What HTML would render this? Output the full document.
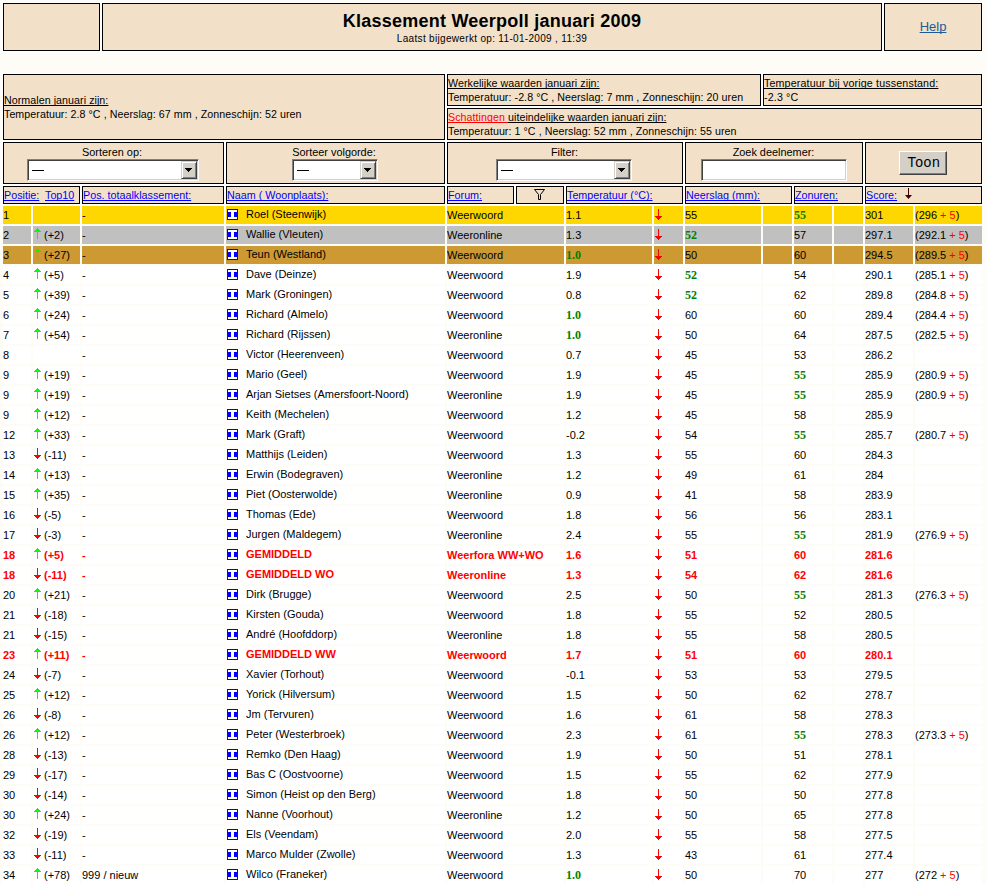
<!DOCTYPE html>
<html><head><meta charset="utf-8"><title>Klassement Weerpoll januari 2009</title>
<style>
html,body{margin:0;padding:0;}
body{width:986px;height:884px;overflow:hidden;background:#FDFCF7;position:relative;font-family:"Liberation Sans",sans-serif;color:#000;}
div,svg{position:absolute;}
u{text-decoration-skip-ink:none;}
.b{box-sizing:border-box;border:1px solid #000;background:#F3E0C8;}
.w{background:#fff;}
.title{text-align:center;font-weight:bold;font-size:18px;line-height:20px;top:10px;letter-spacing:0.24px;}
.sub{text-align:center;font-size:10px;line-height:12px;letter-spacing:0.32px;}
.help{text-align:center;font-size:13px;line-height:16px;color:#1E5A96;}
.info{font-size:10.67px;line-height:14px;white-space:pre;letter-spacing:0.06px;}
.lab{text-align:center;font-size:10.9px;line-height:14px;}
.ht{font-size:10.75px;line-height:16px;color:#00f;white-space:pre;}
.sel{height:22px;box-sizing:border-box;background:#fff;border-style:solid;border-width:1px;border-color:#808080 #fff #fff #808080;box-shadow:inset 1px 1px 0 #404040,inset -1px -1px 0 #D4D0C8;}
.inp{height:22px;box-sizing:border-box;background:#fff;border-style:solid;border-width:1px;border-color:#808080 #fff #fff #808080;box-shadow:inset 1px 1px 0 #404040,inset -1px -1px 0 #D4D0C8;}
.dash{left:4px;top:10px;width:12px;height:1px;background:#000;}
.btn{right:1px;top:1px;width:16px;height:18px;box-sizing:border-box;background:#D4D0C8;border-style:solid;border-width:1px;border-color:#D4D0C8 #404040 #404040 #D4D0C8;box-shadow:inset 1px 1px 0 #fff,inset -1px -1px 0 #808080;}
.tri{left:3px;top:6px;width:0;height:0;border-left:3.5px solid transparent;border-right:3.5px solid transparent;border-top:4px solid #000;}
.toon{width:48px;height:24px;box-sizing:border-box;background:#D4D0C8;border-style:solid;border-width:1px;border-color:#fff #404040 #404040 #fff;box-shadow:inset -1px -1px 0 #808080;font-size:14px;line-height:21px;text-align:center;letter-spacing:0.6px;text-indent:1px;}
.row{left:0;width:986px;height:18px;}
.c{top:0;height:18px;}
.d{top:0;font-size:11px;line-height:18px;white-space:pre;}
.r{color:#f00;font-weight:bold;}
.g{color:#008000;font-weight:bold;font-family:"Liberation Serif",serif;font-size:12px;}
.ai{width:11px;height:11px;}
.ar,.ic{position:absolute;left:0;top:0;}
</style></head><body>
<div class="w" style="left:2px;top:2px;width:981px;height:50px;"></div>
<div class="b" style="left:3px;top:3px;width:97px;height:48px;"></div>
<div class="b" style="left:102px;top:3px;width:780px;height:48px;"></div>
<div class="b" style="left:884px;top:3px;width:98px;height:48px;"></div>
<div class="title" style="left:102px;top:11px;width:780px;">Klassement Weerpoll januari 2009</div>
<div class="sub" style="left:102px;top:33px;width:780px;">Laatst bijgewerkt op: 11-01-2009 , 11:39</div>
<div class="help" style="left:884px;top:19px;width:98px;"><u>Help</u></div>
<div class="w" style="left:2px;top:73px;width:981px;height:132px;"></div>
<div class="b" style="left:3px;top:74px;width:442px;height:66px;"></div>
<div class="b" style="left:447px;top:74px;width:314px;height:32px;"></div>
<div class="b" style="left:763px;top:74px;width:219px;height:32px;"></div>
<div class="b" style="left:447px;top:108px;width:535px;height:32px;"></div>
<div class="info" style="left:4px;top:93px;"><u>Normalen januari zijn:</u><br>Temperatuur: 2.8 °C , Neerslag: 67 mm , Zonneschijn: 52 uren</div>
<div class="info" style="left:448px;top:76px;"><u>Werkelijke waarden januari zijn:</u><br>Temperatuur: -2.8 °C , Neerslag: 7 mm , Zonneschijn: 20 uren</div>
<div class="info" style="left:764px;top:76px;letter-spacing:0.16px"><u>Temperatuur bij vorige tussenstand:</u><br>-2.3 °C</div>
<div class="info" style="left:448px;top:110px;"><u style="color:#f00">Schattingen </u><u>uiteindelijke waarden januari zijn:</u><br>Temperatuur: 1 °C , Neerslag: 52 mm , Zonneschijn: 55 uren</div>
<div class="b" style="left:3px;top:142px;width:221px;height:42px;"></div>
<div class="lab" style="left:2px;top:145px;width:220px;">Sorteren op:</div>
<div class="sel" style="left:27px;top:159px;width:172px;"><div class="dash"></div><div class="btn"><svg style="left:3px;top:6px" width="7" height="4" viewBox="0 0 7 4"><path d="M0 0H7V1H6V2H5V3H4V4H3V3H2V2H1V1H0Z" fill="#000"/></svg></div></div>
<div class="b" style="left:226px;top:142px;width:219px;height:42px;"></div>
<div class="lab" style="left:225px;top:145px;width:218px;">Sorteer volgorde:</div>
<div class="sel" style="left:292px;top:159px;width:86px;"><div class="dash"></div><div class="btn"><svg style="left:3px;top:6px" width="7" height="4" viewBox="0 0 7 4"><path d="M0 0H7V1H6V2H5V3H4V4H3V3H2V2H1V1H0Z" fill="#000"/></svg></div></div>
<div class="b" style="left:447px;top:142px;width:236px;height:42px;"></div>
<div class="lab" style="left:447px;top:145px;width:235px;">Filter:</div>
<div class="sel" style="left:496px;top:159px;width:136px;"><div class="dash"></div><div class="btn"><svg style="left:3px;top:6px" width="7" height="4" viewBox="0 0 7 4"><path d="M0 0H7V1H6V2H5V3H4V4H3V3H2V2H1V1H0Z" fill="#000"/></svg></div></div>
<div class="b" style="left:685px;top:142px;width:178px;height:42px;"></div>
<div class="lab" style="left:685px;top:145px;width:177px;">Zoek deelnemer:</div>
<div class="inp" style="left:701px;top:159px;width:146px;"></div>
<div class="b" style="left:865px;top:142px;width:117px;height:42px;"></div>
<div class="toon" style="left:899px;top:151px;text-indent:2px;">Toon</div>
<div class="b" style="left:3px;top:186px;width:77px;height:18px;"></div>
<div class="b" style="left:82px;top:186px;width:142px;height:18px;"></div>
<div class="b" style="left:226px;top:186px;width:219px;height:18px;"></div>
<div class="b" style="left:447px;top:186px;width:67px;height:18px;"></div>
<div class="b" style="left:516px;top:186px;width:48px;height:18px;"></div>
<div class="b" style="left:566px;top:186px;width:117px;height:18px;"></div>
<div class="b" style="left:685px;top:186px;width:107px;height:18px;"></div>
<div class="b" style="left:794px;top:186px;width:69px;height:18px;"></div>
<div class="b" style="left:865px;top:186px;width:117px;height:18px;"></div>
<div class="ht" style="left:4px;top:187px;"><u>Positie:</u></div>
<div class="ht" style="left:45px;top:187px;"><u>Top10</u></div>
<div class="ht" style="left:83px;top:187px;"><u>Pos. totaalklassement:</u></div>
<div class="ht" style="left:227px;top:187px;"><u>Naam ( Woonplaats):</u></div>
<div class="ht" style="left:448px;top:187px;"><u>Forum:</u></div>
<div class="ht" style="left:567px;top:187px;"><u>Temperatuur (°C):</u></div>
<div class="ht" style="left:686px;top:187px;"><u>Neerslag (mm):</u></div>
<div class="ht" style="left:795px;top:187px;"><u>Zonuren:</u></div>
<div class="ht" style="left:866px;top:187px;"><u>Score:</u></div>
<svg class="ic" style="left:534px;top:189px" width="11" height="11" viewBox="0 0 11 11"><path d="M0.5 0.5H10.5L6.5 5.5V10.5H4.5V5.5Z" fill="none" stroke="#000" stroke-width="1"/></svg>
<svg class="ic" style="left:905px;top:188px" width="7" height="11" viewBox="0 0 7 11"><rect x="3" y="0" width="1" height="7" fill="#400"/><path d="M0 7H7L3.5 11Z" fill="#400"/></svg>
<div class="row" style="top:206px">
<div class="c" style="left:3px;width:28px;background:#FFD700"></div>
<div class="c" style="left:33px;width:47px;background:#FFD700"></div>
<div class="c" style="left:82px;width:142px;background:#FFD700"></div>
<div class="c" style="left:226px;width:219px;background:#FFD700"></div>
<div class="c" style="left:447px;width:117px;background:#FFD700"></div>
<div class="c" style="left:566px;width:86px;background:#FFD700"></div>
<div class="c" style="left:654px;width:29px;background:#FFD700"></div>
<div class="c" style="left:685px;width:76px;background:#FFD700"></div>
<div class="c" style="left:763px;width:29px;background:#FFD700"></div>
<div class="c" style="left:794px;width:38px;background:#FFD700"></div>
<div class="c" style="left:834px;width:29px;background:#FFD700"></div>
<div class="c" style="left:865px;width:48px;background:#FFD700"></div>
<div class="c" style="left:915px;width:67px;background:#FFD700"></div>
<div class="d" style="left:3px;">1</div>
<div class="d" style="left:82px;">-</div>
<div class="ai" style="left:227px;top:3px"><svg class="ic" width="11" height="11" viewBox="0 0 11 11"><rect width="11" height="11" fill="#00f"/><path d="M1 1h9v2H7v5h3v2H1V8h3V3H1z" fill="#fff"/></svg></div>
<div class="d" style="left:246px;top:-1px">Roel (Steenwijk)</div>
<div class="d" style="left:447px;">Weerwoord</div>
<div class="d" style="left:566px;">1.1</div>
<div class="ai" style="left:655px;top:3px"><svg class="ar" width="7" height="11" viewBox="0 0 7 11"><path d="M3 0h1v7h3v1h-1v1h-1v1h-1v1H3v-1H2V9H1V8H0V7h3z" fill="#f00"/></svg></div>
<div class="d" style="left:685px;">55</div>
<div class="d g" style="left:794px">55</div>
<div class="d" style="left:865px;">301</div>
<div class="d" style="left:915px;">(296 <span style="color:#f00">+ 5</span>)</div>
</div>
<div class="row" style="top:226px">
<div class="c" style="left:3px;width:28px;background:#C0C0C0"></div>
<div class="c" style="left:33px;width:47px;background:#C0C0C0"></div>
<div class="c" style="left:82px;width:142px;background:#C0C0C0"></div>
<div class="c" style="left:226px;width:219px;background:#C0C0C0"></div>
<div class="c" style="left:447px;width:117px;background:#C0C0C0"></div>
<div class="c" style="left:566px;width:86px;background:#C0C0C0"></div>
<div class="c" style="left:654px;width:29px;background:#C0C0C0"></div>
<div class="c" style="left:685px;width:76px;background:#C0C0C0"></div>
<div class="c" style="left:763px;width:29px;background:#C0C0C0"></div>
<div class="c" style="left:794px;width:38px;background:#C0C0C0"></div>
<div class="c" style="left:834px;width:29px;background:#C0C0C0"></div>
<div class="c" style="left:865px;width:48px;background:#C0C0C0"></div>
<div class="c" style="left:915px;width:67px;background:#C0C0C0"></div>
<div class="d" style="left:3px;">2</div>
<div class="ai" style="left:34px;top:2px"><svg class="ar" width="7" height="11" viewBox="0 0 7 11"><path d="M3 0h1v1h1v1h1v1h1v1H4v7H3V4H0V3h1V2h1V1h1z" fill="#0f0"/></svg></div>
<div class="d" style="left:44px;">(+2)</div>
<div class="d" style="left:82px;">-</div>
<div class="ai" style="left:227px;top:3px"><svg class="ic" width="11" height="11" viewBox="0 0 11 11"><rect width="11" height="11" fill="#00f"/><path d="M1 1h9v2H7v5h3v2H1V8h3V3H1z" fill="#fff"/></svg></div>
<div class="d" style="left:246px;top:-1px">Wallie (Vleuten)</div>
<div class="d" style="left:447px;">Weeronline</div>
<div class="d" style="left:566px;">1.3</div>
<div class="ai" style="left:655px;top:3px"><svg class="ar" width="7" height="11" viewBox="0 0 7 11"><path d="M3 0h1v7h3v1h-1v1h-1v1h-1v1H3v-1H2V9H1V8H0V7h3z" fill="#f00"/></svg></div>
<div class="d g" style="left:685px">52</div>
<div class="d" style="left:794px;">57</div>
<div class="d" style="left:865px;">297.1</div>
<div class="d" style="left:915px;">(292.1 <span style="color:#f00">+ 5</span>)</div>
</div>
<div class="row" style="top:246px">
<div class="c" style="left:3px;width:28px;background:#CC9933"></div>
<div class="c" style="left:33px;width:47px;background:#CC9933"></div>
<div class="c" style="left:82px;width:142px;background:#CC9933"></div>
<div class="c" style="left:226px;width:219px;background:#CC9933"></div>
<div class="c" style="left:447px;width:117px;background:#CC9933"></div>
<div class="c" style="left:566px;width:86px;background:#CC9933"></div>
<div class="c" style="left:654px;width:29px;background:#CC9933"></div>
<div class="c" style="left:685px;width:76px;background:#CC9933"></div>
<div class="c" style="left:763px;width:29px;background:#CC9933"></div>
<div class="c" style="left:794px;width:38px;background:#CC9933"></div>
<div class="c" style="left:834px;width:29px;background:#CC9933"></div>
<div class="c" style="left:865px;width:48px;background:#CC9933"></div>
<div class="c" style="left:915px;width:67px;background:#CC9933"></div>
<div class="d" style="left:3px;">3</div>
<div class="ai" style="left:34px;top:2px"><svg class="ar" width="7" height="11" viewBox="0 0 7 11"><path d="M3 0h1v1h1v1h1v1h1v1H4v7H3V4H0V3h1V2h1V1h1z" fill="#0f0"/></svg></div>
<div class="d" style="left:44px;">(+27)</div>
<div class="d" style="left:82px;">-</div>
<div class="ai" style="left:227px;top:3px"><svg class="ic" width="11" height="11" viewBox="0 0 11 11"><rect width="11" height="11" fill="#00f"/><path d="M1 1h9v2H7v5h3v2H1V8h3V3H1z" fill="#fff"/></svg></div>
<div class="d" style="left:246px;top:-1px">Teun (Westland)</div>
<div class="d" style="left:447px;">Weerwoord</div>
<div class="d g" style="left:566px">1.0</div>
<div class="ai" style="left:655px;top:3px"><svg class="ar" width="7" height="11" viewBox="0 0 7 11"><path d="M3 0h1v7h3v1h-1v1h-1v1h-1v1H3v-1H2V9H1V8H0V7h3z" fill="#f00"/></svg></div>
<div class="d" style="left:685px;">50</div>
<div class="d" style="left:794px;">60</div>
<div class="d" style="left:865px;">294.5</div>
<div class="d" style="left:915px;">(289.5 <span style="color:#f00">+ 5</span>)</div>
</div>
<div class="row" style="top:266px">
<div class="c" style="left:3px;width:28px;background:#fff"></div>
<div class="c" style="left:33px;width:47px;background:#fff"></div>
<div class="c" style="left:82px;width:142px;background:#fff"></div>
<div class="c" style="left:226px;width:219px;background:#fff"></div>
<div class="c" style="left:447px;width:117px;background:#fff"></div>
<div class="c" style="left:566px;width:86px;background:#fff"></div>
<div class="c" style="left:654px;width:29px;background:#fff"></div>
<div class="c" style="left:685px;width:76px;background:#fff"></div>
<div class="c" style="left:763px;width:29px;background:#fff"></div>
<div class="c" style="left:794px;width:38px;background:#fff"></div>
<div class="c" style="left:834px;width:29px;background:#fff"></div>
<div class="c" style="left:865px;width:48px;background:#fff"></div>
<div class="c" style="left:915px;width:67px;background:#fff"></div>
<div class="d" style="left:3px;">4</div>
<div class="ai" style="left:34px;top:2px"><svg class="ar" width="7" height="11" viewBox="0 0 7 11"><path d="M3 0h1v1h1v1h1v1h1v1H4v7H3V4H0V3h1V2h1V1h1z" fill="#0f0"/></svg></div>
<div class="d" style="left:44px;">(+5)</div>
<div class="d" style="left:82px;">-</div>
<div class="ai" style="left:227px;top:3px"><svg class="ic" width="11" height="11" viewBox="0 0 11 11"><rect width="11" height="11" fill="#00f"/><path d="M1 1h9v2H7v5h3v2H1V8h3V3H1z" fill="#fff"/></svg></div>
<div class="d" style="left:246px;top:-1px">Dave (Deinze)</div>
<div class="d" style="left:447px;">Weerwoord</div>
<div class="d" style="left:566px;">1.9</div>
<div class="ai" style="left:655px;top:3px"><svg class="ar" width="7" height="11" viewBox="0 0 7 11"><path d="M3 0h1v7h3v1h-1v1h-1v1h-1v1H3v-1H2V9H1V8H0V7h3z" fill="#f00"/></svg></div>
<div class="d g" style="left:685px">52</div>
<div class="d" style="left:794px;">54</div>
<div class="d" style="left:865px;">290.1</div>
<div class="d" style="left:915px;">(285.1 <span style="color:#f00">+ 5</span>)</div>
</div>
<div class="row" style="top:286px">
<div class="c" style="left:3px;width:28px;background:#fff"></div>
<div class="c" style="left:33px;width:47px;background:#fff"></div>
<div class="c" style="left:82px;width:142px;background:#fff"></div>
<div class="c" style="left:226px;width:219px;background:#fff"></div>
<div class="c" style="left:447px;width:117px;background:#fff"></div>
<div class="c" style="left:566px;width:86px;background:#fff"></div>
<div class="c" style="left:654px;width:29px;background:#fff"></div>
<div class="c" style="left:685px;width:76px;background:#fff"></div>
<div class="c" style="left:763px;width:29px;background:#fff"></div>
<div class="c" style="left:794px;width:38px;background:#fff"></div>
<div class="c" style="left:834px;width:29px;background:#fff"></div>
<div class="c" style="left:865px;width:48px;background:#fff"></div>
<div class="c" style="left:915px;width:67px;background:#fff"></div>
<div class="d" style="left:3px;">5</div>
<div class="ai" style="left:34px;top:2px"><svg class="ar" width="7" height="11" viewBox="0 0 7 11"><path d="M3 0h1v1h1v1h1v1h1v1H4v7H3V4H0V3h1V2h1V1h1z" fill="#0f0"/></svg></div>
<div class="d" style="left:44px;">(+39)</div>
<div class="d" style="left:82px;">-</div>
<div class="ai" style="left:227px;top:3px"><svg class="ic" width="11" height="11" viewBox="0 0 11 11"><rect width="11" height="11" fill="#00f"/><path d="M1 1h9v2H7v5h3v2H1V8h3V3H1z" fill="#fff"/></svg></div>
<div class="d" style="left:246px;top:-1px">Mark (Groningen)</div>
<div class="d" style="left:447px;">Weerwoord</div>
<div class="d" style="left:566px;">0.8</div>
<div class="ai" style="left:655px;top:3px"><svg class="ar" width="7" height="11" viewBox="0 0 7 11"><path d="M3 0h1v7h3v1h-1v1h-1v1h-1v1H3v-1H2V9H1V8H0V7h3z" fill="#f00"/></svg></div>
<div class="d g" style="left:685px">52</div>
<div class="d" style="left:794px;">62</div>
<div class="d" style="left:865px;">289.8</div>
<div class="d" style="left:915px;">(284.8 <span style="color:#f00">+ 5</span>)</div>
</div>
<div class="row" style="top:306px">
<div class="c" style="left:3px;width:28px;background:#fff"></div>
<div class="c" style="left:33px;width:47px;background:#fff"></div>
<div class="c" style="left:82px;width:142px;background:#fff"></div>
<div class="c" style="left:226px;width:219px;background:#fff"></div>
<div class="c" style="left:447px;width:117px;background:#fff"></div>
<div class="c" style="left:566px;width:86px;background:#fff"></div>
<div class="c" style="left:654px;width:29px;background:#fff"></div>
<div class="c" style="left:685px;width:76px;background:#fff"></div>
<div class="c" style="left:763px;width:29px;background:#fff"></div>
<div class="c" style="left:794px;width:38px;background:#fff"></div>
<div class="c" style="left:834px;width:29px;background:#fff"></div>
<div class="c" style="left:865px;width:48px;background:#fff"></div>
<div class="c" style="left:915px;width:67px;background:#fff"></div>
<div class="d" style="left:3px;">6</div>
<div class="ai" style="left:34px;top:2px"><svg class="ar" width="7" height="11" viewBox="0 0 7 11"><path d="M3 0h1v1h1v1h1v1h1v1H4v7H3V4H0V3h1V2h1V1h1z" fill="#0f0"/></svg></div>
<div class="d" style="left:44px;">(+24)</div>
<div class="d" style="left:82px;">-</div>
<div class="ai" style="left:227px;top:3px"><svg class="ic" width="11" height="11" viewBox="0 0 11 11"><rect width="11" height="11" fill="#00f"/><path d="M1 1h9v2H7v5h3v2H1V8h3V3H1z" fill="#fff"/></svg></div>
<div class="d" style="left:246px;top:-1px">Richard (Almelo)</div>
<div class="d" style="left:447px;">Weerwoord</div>
<div class="d g" style="left:566px">1.0</div>
<div class="ai" style="left:655px;top:3px"><svg class="ar" width="7" height="11" viewBox="0 0 7 11"><path d="M3 0h1v7h3v1h-1v1h-1v1h-1v1H3v-1H2V9H1V8H0V7h3z" fill="#f00"/></svg></div>
<div class="d" style="left:685px;">60</div>
<div class="d" style="left:794px;">60</div>
<div class="d" style="left:865px;">289.4</div>
<div class="d" style="left:915px;">(284.4 <span style="color:#f00">+ 5</span>)</div>
</div>
<div class="row" style="top:326px">
<div class="c" style="left:3px;width:28px;background:#fff"></div>
<div class="c" style="left:33px;width:47px;background:#fff"></div>
<div class="c" style="left:82px;width:142px;background:#fff"></div>
<div class="c" style="left:226px;width:219px;background:#fff"></div>
<div class="c" style="left:447px;width:117px;background:#fff"></div>
<div class="c" style="left:566px;width:86px;background:#fff"></div>
<div class="c" style="left:654px;width:29px;background:#fff"></div>
<div class="c" style="left:685px;width:76px;background:#fff"></div>
<div class="c" style="left:763px;width:29px;background:#fff"></div>
<div class="c" style="left:794px;width:38px;background:#fff"></div>
<div class="c" style="left:834px;width:29px;background:#fff"></div>
<div class="c" style="left:865px;width:48px;background:#fff"></div>
<div class="c" style="left:915px;width:67px;background:#fff"></div>
<div class="d" style="left:3px;">7</div>
<div class="ai" style="left:34px;top:2px"><svg class="ar" width="7" height="11" viewBox="0 0 7 11"><path d="M3 0h1v1h1v1h1v1h1v1H4v7H3V4H0V3h1V2h1V1h1z" fill="#0f0"/></svg></div>
<div class="d" style="left:44px;">(+54)</div>
<div class="d" style="left:82px;">-</div>
<div class="ai" style="left:227px;top:3px"><svg class="ic" width="11" height="11" viewBox="0 0 11 11"><rect width="11" height="11" fill="#00f"/><path d="M1 1h9v2H7v5h3v2H1V8h3V3H1z" fill="#fff"/></svg></div>
<div class="d" style="left:246px;top:-1px">Richard (Rijssen)</div>
<div class="d" style="left:447px;">Weeronline</div>
<div class="d g" style="left:566px">1.0</div>
<div class="ai" style="left:655px;top:3px"><svg class="ar" width="7" height="11" viewBox="0 0 7 11"><path d="M3 0h1v7h3v1h-1v1h-1v1h-1v1H3v-1H2V9H1V8H0V7h3z" fill="#f00"/></svg></div>
<div class="d" style="left:685px;">50</div>
<div class="d" style="left:794px;">64</div>
<div class="d" style="left:865px;">287.5</div>
<div class="d" style="left:915px;">(282.5 <span style="color:#f00">+ 5</span>)</div>
</div>
<div class="row" style="top:346px">
<div class="c" style="left:3px;width:28px;background:#fff"></div>
<div class="c" style="left:33px;width:47px;background:#fff"></div>
<div class="c" style="left:82px;width:142px;background:#fff"></div>
<div class="c" style="left:226px;width:219px;background:#fff"></div>
<div class="c" style="left:447px;width:117px;background:#fff"></div>
<div class="c" style="left:566px;width:86px;background:#fff"></div>
<div class="c" style="left:654px;width:29px;background:#fff"></div>
<div class="c" style="left:685px;width:76px;background:#fff"></div>
<div class="c" style="left:763px;width:29px;background:#fff"></div>
<div class="c" style="left:794px;width:38px;background:#fff"></div>
<div class="c" style="left:834px;width:29px;background:#fff"></div>
<div class="c" style="left:865px;width:48px;background:#fff"></div>
<div class="c" style="left:915px;width:67px;background:#fff"></div>
<div class="d" style="left:3px;">8</div>
<div class="d" style="left:82px;">-</div>
<div class="ai" style="left:227px;top:3px"><svg class="ic" width="11" height="11" viewBox="0 0 11 11"><rect width="11" height="11" fill="#00f"/><path d="M1 1h9v2H7v5h3v2H1V8h3V3H1z" fill="#fff"/></svg></div>
<div class="d" style="left:246px;top:-1px">Victor (Heerenveen)</div>
<div class="d" style="left:447px;">Weerwoord</div>
<div class="d" style="left:566px;">0.7</div>
<div class="ai" style="left:655px;top:3px"><svg class="ar" width="7" height="11" viewBox="0 0 7 11"><path d="M3 0h1v7h3v1h-1v1h-1v1h-1v1H3v-1H2V9H1V8H0V7h3z" fill="#f00"/></svg></div>
<div class="d" style="left:685px;">45</div>
<div class="d" style="left:794px;">53</div>
<div class="d" style="left:865px;">286.2</div>
</div>
<div class="row" style="top:366px">
<div class="c" style="left:3px;width:28px;background:#fff"></div>
<div class="c" style="left:33px;width:47px;background:#fff"></div>
<div class="c" style="left:82px;width:142px;background:#fff"></div>
<div class="c" style="left:226px;width:219px;background:#fff"></div>
<div class="c" style="left:447px;width:117px;background:#fff"></div>
<div class="c" style="left:566px;width:86px;background:#fff"></div>
<div class="c" style="left:654px;width:29px;background:#fff"></div>
<div class="c" style="left:685px;width:76px;background:#fff"></div>
<div class="c" style="left:763px;width:29px;background:#fff"></div>
<div class="c" style="left:794px;width:38px;background:#fff"></div>
<div class="c" style="left:834px;width:29px;background:#fff"></div>
<div class="c" style="left:865px;width:48px;background:#fff"></div>
<div class="c" style="left:915px;width:67px;background:#fff"></div>
<div class="d" style="left:3px;">9</div>
<div class="ai" style="left:34px;top:2px"><svg class="ar" width="7" height="11" viewBox="0 0 7 11"><path d="M3 0h1v1h1v1h1v1h1v1H4v7H3V4H0V3h1V2h1V1h1z" fill="#0f0"/></svg></div>
<div class="d" style="left:44px;">(+19)</div>
<div class="d" style="left:82px;">-</div>
<div class="ai" style="left:227px;top:3px"><svg class="ic" width="11" height="11" viewBox="0 0 11 11"><rect width="11" height="11" fill="#00f"/><path d="M1 1h9v2H7v5h3v2H1V8h3V3H1z" fill="#fff"/></svg></div>
<div class="d" style="left:246px;top:-1px">Mario (Geel)</div>
<div class="d" style="left:447px;">Weerwoord</div>
<div class="d" style="left:566px;">1.9</div>
<div class="ai" style="left:655px;top:3px"><svg class="ar" width="7" height="11" viewBox="0 0 7 11"><path d="M3 0h1v7h3v1h-1v1h-1v1h-1v1H3v-1H2V9H1V8H0V7h3z" fill="#f00"/></svg></div>
<div class="d" style="left:685px;">45</div>
<div class="d g" style="left:794px">55</div>
<div class="d" style="left:865px;">285.9</div>
<div class="d" style="left:915px;">(280.9 <span style="color:#f00">+ 5</span>)</div>
</div>
<div class="row" style="top:386px">
<div class="c" style="left:3px;width:28px;background:#fff"></div>
<div class="c" style="left:33px;width:47px;background:#fff"></div>
<div class="c" style="left:82px;width:142px;background:#fff"></div>
<div class="c" style="left:226px;width:219px;background:#fff"></div>
<div class="c" style="left:447px;width:117px;background:#fff"></div>
<div class="c" style="left:566px;width:86px;background:#fff"></div>
<div class="c" style="left:654px;width:29px;background:#fff"></div>
<div class="c" style="left:685px;width:76px;background:#fff"></div>
<div class="c" style="left:763px;width:29px;background:#fff"></div>
<div class="c" style="left:794px;width:38px;background:#fff"></div>
<div class="c" style="left:834px;width:29px;background:#fff"></div>
<div class="c" style="left:865px;width:48px;background:#fff"></div>
<div class="c" style="left:915px;width:67px;background:#fff"></div>
<div class="d" style="left:3px;">9</div>
<div class="ai" style="left:34px;top:2px"><svg class="ar" width="7" height="11" viewBox="0 0 7 11"><path d="M3 0h1v1h1v1h1v1h1v1H4v7H3V4H0V3h1V2h1V1h1z" fill="#0f0"/></svg></div>
<div class="d" style="left:44px;">(+19)</div>
<div class="d" style="left:82px;">-</div>
<div class="ai" style="left:227px;top:3px"><svg class="ic" width="11" height="11" viewBox="0 0 11 11"><rect width="11" height="11" fill="#00f"/><path d="M1 1h9v2H7v5h3v2H1V8h3V3H1z" fill="#fff"/></svg></div>
<div class="d" style="left:246px;top:-1px">Arjan Sietses (Amersfoort-Noord)</div>
<div class="d" style="left:447px;">Weeronline</div>
<div class="d" style="left:566px;">1.9</div>
<div class="ai" style="left:655px;top:3px"><svg class="ar" width="7" height="11" viewBox="0 0 7 11"><path d="M3 0h1v7h3v1h-1v1h-1v1h-1v1H3v-1H2V9H1V8H0V7h3z" fill="#f00"/></svg></div>
<div class="d" style="left:685px;">45</div>
<div class="d g" style="left:794px">55</div>
<div class="d" style="left:865px;">285.9</div>
<div class="d" style="left:915px;">(280.9 <span style="color:#f00">+ 5</span>)</div>
</div>
<div class="row" style="top:406px">
<div class="c" style="left:3px;width:28px;background:#fff"></div>
<div class="c" style="left:33px;width:47px;background:#fff"></div>
<div class="c" style="left:82px;width:142px;background:#fff"></div>
<div class="c" style="left:226px;width:219px;background:#fff"></div>
<div class="c" style="left:447px;width:117px;background:#fff"></div>
<div class="c" style="left:566px;width:86px;background:#fff"></div>
<div class="c" style="left:654px;width:29px;background:#fff"></div>
<div class="c" style="left:685px;width:76px;background:#fff"></div>
<div class="c" style="left:763px;width:29px;background:#fff"></div>
<div class="c" style="left:794px;width:38px;background:#fff"></div>
<div class="c" style="left:834px;width:29px;background:#fff"></div>
<div class="c" style="left:865px;width:48px;background:#fff"></div>
<div class="c" style="left:915px;width:67px;background:#fff"></div>
<div class="d" style="left:3px;">9</div>
<div class="ai" style="left:34px;top:2px"><svg class="ar" width="7" height="11" viewBox="0 0 7 11"><path d="M3 0h1v1h1v1h1v1h1v1H4v7H3V4H0V3h1V2h1V1h1z" fill="#0f0"/></svg></div>
<div class="d" style="left:44px;">(+12)</div>
<div class="d" style="left:82px;">-</div>
<div class="ai" style="left:227px;top:3px"><svg class="ic" width="11" height="11" viewBox="0 0 11 11"><rect width="11" height="11" fill="#00f"/><path d="M1 1h9v2H7v5h3v2H1V8h3V3H1z" fill="#fff"/></svg></div>
<div class="d" style="left:246px;top:-1px">Keith (Mechelen)</div>
<div class="d" style="left:447px;">Weerwoord</div>
<div class="d" style="left:566px;">1.2</div>
<div class="ai" style="left:655px;top:3px"><svg class="ar" width="7" height="11" viewBox="0 0 7 11"><path d="M3 0h1v7h3v1h-1v1h-1v1h-1v1H3v-1H2V9H1V8H0V7h3z" fill="#f00"/></svg></div>
<div class="d" style="left:685px;">45</div>
<div class="d" style="left:794px;">58</div>
<div class="d" style="left:865px;">285.9</div>
</div>
<div class="row" style="top:426px">
<div class="c" style="left:3px;width:28px;background:#fff"></div>
<div class="c" style="left:33px;width:47px;background:#fff"></div>
<div class="c" style="left:82px;width:142px;background:#fff"></div>
<div class="c" style="left:226px;width:219px;background:#fff"></div>
<div class="c" style="left:447px;width:117px;background:#fff"></div>
<div class="c" style="left:566px;width:86px;background:#fff"></div>
<div class="c" style="left:654px;width:29px;background:#fff"></div>
<div class="c" style="left:685px;width:76px;background:#fff"></div>
<div class="c" style="left:763px;width:29px;background:#fff"></div>
<div class="c" style="left:794px;width:38px;background:#fff"></div>
<div class="c" style="left:834px;width:29px;background:#fff"></div>
<div class="c" style="left:865px;width:48px;background:#fff"></div>
<div class="c" style="left:915px;width:67px;background:#fff"></div>
<div class="d" style="left:3px;">12</div>
<div class="ai" style="left:34px;top:2px"><svg class="ar" width="7" height="11" viewBox="0 0 7 11"><path d="M3 0h1v1h1v1h1v1h1v1H4v7H3V4H0V3h1V2h1V1h1z" fill="#0f0"/></svg></div>
<div class="d" style="left:44px;">(+33)</div>
<div class="d" style="left:82px;">-</div>
<div class="ai" style="left:227px;top:3px"><svg class="ic" width="11" height="11" viewBox="0 0 11 11"><rect width="11" height="11" fill="#00f"/><path d="M1 1h9v2H7v5h3v2H1V8h3V3H1z" fill="#fff"/></svg></div>
<div class="d" style="left:246px;top:-1px">Mark (Graft)</div>
<div class="d" style="left:447px;">Weerwoord</div>
<div class="d" style="left:566px;">-0.2</div>
<div class="ai" style="left:655px;top:3px"><svg class="ar" width="7" height="11" viewBox="0 0 7 11"><path d="M3 0h1v7h3v1h-1v1h-1v1h-1v1H3v-1H2V9H1V8H0V7h3z" fill="#f00"/></svg></div>
<div class="d" style="left:685px;">54</div>
<div class="d g" style="left:794px">55</div>
<div class="d" style="left:865px;">285.7</div>
<div class="d" style="left:915px;">(280.7 <span style="color:#f00">+ 5</span>)</div>
</div>
<div class="row" style="top:446px">
<div class="c" style="left:3px;width:28px;background:#fff"></div>
<div class="c" style="left:33px;width:47px;background:#fff"></div>
<div class="c" style="left:82px;width:142px;background:#fff"></div>
<div class="c" style="left:226px;width:219px;background:#fff"></div>
<div class="c" style="left:447px;width:117px;background:#fff"></div>
<div class="c" style="left:566px;width:86px;background:#fff"></div>
<div class="c" style="left:654px;width:29px;background:#fff"></div>
<div class="c" style="left:685px;width:76px;background:#fff"></div>
<div class="c" style="left:763px;width:29px;background:#fff"></div>
<div class="c" style="left:794px;width:38px;background:#fff"></div>
<div class="c" style="left:834px;width:29px;background:#fff"></div>
<div class="c" style="left:865px;width:48px;background:#fff"></div>
<div class="c" style="left:915px;width:67px;background:#fff"></div>
<div class="d" style="left:3px;">13</div>
<div class="ai" style="left:34px;top:2px"><svg class="ar" width="7" height="11" viewBox="0 0 7 11"><path d="M3 0h1v7h3v1h-1v1h-1v1h-1v1H3v-1H2V9H1V8H0V7h3z" fill="#f00"/></svg></div>
<div class="d" style="left:44px;">(-11)</div>
<div class="d" style="left:82px;">-</div>
<div class="ai" style="left:227px;top:3px"><svg class="ic" width="11" height="11" viewBox="0 0 11 11"><rect width="11" height="11" fill="#00f"/><path d="M1 1h9v2H7v5h3v2H1V8h3V3H1z" fill="#fff"/></svg></div>
<div class="d" style="left:246px;top:-1px">Matthijs (Leiden)</div>
<div class="d" style="left:447px;">Weerwoord</div>
<div class="d" style="left:566px;">1.3</div>
<div class="ai" style="left:655px;top:3px"><svg class="ar" width="7" height="11" viewBox="0 0 7 11"><path d="M3 0h1v7h3v1h-1v1h-1v1h-1v1H3v-1H2V9H1V8H0V7h3z" fill="#f00"/></svg></div>
<div class="d" style="left:685px;">55</div>
<div class="d" style="left:794px;">60</div>
<div class="d" style="left:865px;">284.3</div>
</div>
<div class="row" style="top:466px">
<div class="c" style="left:3px;width:28px;background:#fff"></div>
<div class="c" style="left:33px;width:47px;background:#fff"></div>
<div class="c" style="left:82px;width:142px;background:#fff"></div>
<div class="c" style="left:226px;width:219px;background:#fff"></div>
<div class="c" style="left:447px;width:117px;background:#fff"></div>
<div class="c" style="left:566px;width:86px;background:#fff"></div>
<div class="c" style="left:654px;width:29px;background:#fff"></div>
<div class="c" style="left:685px;width:76px;background:#fff"></div>
<div class="c" style="left:763px;width:29px;background:#fff"></div>
<div class="c" style="left:794px;width:38px;background:#fff"></div>
<div class="c" style="left:834px;width:29px;background:#fff"></div>
<div class="c" style="left:865px;width:48px;background:#fff"></div>
<div class="c" style="left:915px;width:67px;background:#fff"></div>
<div class="d" style="left:3px;">14</div>
<div class="ai" style="left:34px;top:2px"><svg class="ar" width="7" height="11" viewBox="0 0 7 11"><path d="M3 0h1v1h1v1h1v1h1v1H4v7H3V4H0V3h1V2h1V1h1z" fill="#0f0"/></svg></div>
<div class="d" style="left:44px;">(+13)</div>
<div class="d" style="left:82px;">-</div>
<div class="ai" style="left:227px;top:3px"><svg class="ic" width="11" height="11" viewBox="0 0 11 11"><rect width="11" height="11" fill="#00f"/><path d="M1 1h9v2H7v5h3v2H1V8h3V3H1z" fill="#fff"/></svg></div>
<div class="d" style="left:246px;top:-1px">Erwin (Bodegraven)</div>
<div class="d" style="left:447px;">Weeronline</div>
<div class="d" style="left:566px;">1.2</div>
<div class="ai" style="left:655px;top:3px"><svg class="ar" width="7" height="11" viewBox="0 0 7 11"><path d="M3 0h1v7h3v1h-1v1h-1v1h-1v1H3v-1H2V9H1V8H0V7h3z" fill="#f00"/></svg></div>
<div class="d" style="left:685px;">49</div>
<div class="d" style="left:794px;">61</div>
<div class="d" style="left:865px;">284</div>
</div>
<div class="row" style="top:486px">
<div class="c" style="left:3px;width:28px;background:#fff"></div>
<div class="c" style="left:33px;width:47px;background:#fff"></div>
<div class="c" style="left:82px;width:142px;background:#fff"></div>
<div class="c" style="left:226px;width:219px;background:#fff"></div>
<div class="c" style="left:447px;width:117px;background:#fff"></div>
<div class="c" style="left:566px;width:86px;background:#fff"></div>
<div class="c" style="left:654px;width:29px;background:#fff"></div>
<div class="c" style="left:685px;width:76px;background:#fff"></div>
<div class="c" style="left:763px;width:29px;background:#fff"></div>
<div class="c" style="left:794px;width:38px;background:#fff"></div>
<div class="c" style="left:834px;width:29px;background:#fff"></div>
<div class="c" style="left:865px;width:48px;background:#fff"></div>
<div class="c" style="left:915px;width:67px;background:#fff"></div>
<div class="d" style="left:3px;">15</div>
<div class="ai" style="left:34px;top:2px"><svg class="ar" width="7" height="11" viewBox="0 0 7 11"><path d="M3 0h1v1h1v1h1v1h1v1H4v7H3V4H0V3h1V2h1V1h1z" fill="#0f0"/></svg></div>
<div class="d" style="left:44px;">(+35)</div>
<div class="d" style="left:82px;">-</div>
<div class="ai" style="left:227px;top:3px"><svg class="ic" width="11" height="11" viewBox="0 0 11 11"><rect width="11" height="11" fill="#00f"/><path d="M1 1h9v2H7v5h3v2H1V8h3V3H1z" fill="#fff"/></svg></div>
<div class="d" style="left:246px;top:-1px">Piet (Oosterwolde)</div>
<div class="d" style="left:447px;">Weeronline</div>
<div class="d" style="left:566px;">0.9</div>
<div class="ai" style="left:655px;top:3px"><svg class="ar" width="7" height="11" viewBox="0 0 7 11"><path d="M3 0h1v7h3v1h-1v1h-1v1h-1v1H3v-1H2V9H1V8H0V7h3z" fill="#f00"/></svg></div>
<div class="d" style="left:685px;">41</div>
<div class="d" style="left:794px;">58</div>
<div class="d" style="left:865px;">283.9</div>
</div>
<div class="row" style="top:506px">
<div class="c" style="left:3px;width:28px;background:#fff"></div>
<div class="c" style="left:33px;width:47px;background:#fff"></div>
<div class="c" style="left:82px;width:142px;background:#fff"></div>
<div class="c" style="left:226px;width:219px;background:#fff"></div>
<div class="c" style="left:447px;width:117px;background:#fff"></div>
<div class="c" style="left:566px;width:86px;background:#fff"></div>
<div class="c" style="left:654px;width:29px;background:#fff"></div>
<div class="c" style="left:685px;width:76px;background:#fff"></div>
<div class="c" style="left:763px;width:29px;background:#fff"></div>
<div class="c" style="left:794px;width:38px;background:#fff"></div>
<div class="c" style="left:834px;width:29px;background:#fff"></div>
<div class="c" style="left:865px;width:48px;background:#fff"></div>
<div class="c" style="left:915px;width:67px;background:#fff"></div>
<div class="d" style="left:3px;">16</div>
<div class="ai" style="left:34px;top:2px"><svg class="ar" width="7" height="11" viewBox="0 0 7 11"><path d="M3 0h1v7h3v1h-1v1h-1v1h-1v1H3v-1H2V9H1V8H0V7h3z" fill="#f00"/></svg></div>
<div class="d" style="left:44px;">(-5)</div>
<div class="d" style="left:82px;">-</div>
<div class="ai" style="left:227px;top:3px"><svg class="ic" width="11" height="11" viewBox="0 0 11 11"><rect width="11" height="11" fill="#00f"/><path d="M1 1h9v2H7v5h3v2H1V8h3V3H1z" fill="#fff"/></svg></div>
<div class="d" style="left:246px;top:-1px">Thomas (Ede)</div>
<div class="d" style="left:447px;">Weerwoord</div>
<div class="d" style="left:566px;">1.8</div>
<div class="ai" style="left:655px;top:3px"><svg class="ar" width="7" height="11" viewBox="0 0 7 11"><path d="M3 0h1v7h3v1h-1v1h-1v1h-1v1H3v-1H2V9H1V8H0V7h3z" fill="#f00"/></svg></div>
<div class="d" style="left:685px;">56</div>
<div class="d" style="left:794px;">56</div>
<div class="d" style="left:865px;">283.1</div>
</div>
<div class="row" style="top:526px">
<div class="c" style="left:3px;width:28px;background:#fff"></div>
<div class="c" style="left:33px;width:47px;background:#fff"></div>
<div class="c" style="left:82px;width:142px;background:#fff"></div>
<div class="c" style="left:226px;width:219px;background:#fff"></div>
<div class="c" style="left:447px;width:117px;background:#fff"></div>
<div class="c" style="left:566px;width:86px;background:#fff"></div>
<div class="c" style="left:654px;width:29px;background:#fff"></div>
<div class="c" style="left:685px;width:76px;background:#fff"></div>
<div class="c" style="left:763px;width:29px;background:#fff"></div>
<div class="c" style="left:794px;width:38px;background:#fff"></div>
<div class="c" style="left:834px;width:29px;background:#fff"></div>
<div class="c" style="left:865px;width:48px;background:#fff"></div>
<div class="c" style="left:915px;width:67px;background:#fff"></div>
<div class="d" style="left:3px;">17</div>
<div class="ai" style="left:34px;top:2px"><svg class="ar" width="7" height="11" viewBox="0 0 7 11"><path d="M3 0h1v7h3v1h-1v1h-1v1h-1v1H3v-1H2V9H1V8H0V7h3z" fill="#f00"/></svg></div>
<div class="d" style="left:44px;">(-3)</div>
<div class="d" style="left:82px;">-</div>
<div class="ai" style="left:227px;top:3px"><svg class="ic" width="11" height="11" viewBox="0 0 11 11"><rect width="11" height="11" fill="#00f"/><path d="M1 1h9v2H7v5h3v2H1V8h3V3H1z" fill="#fff"/></svg></div>
<div class="d" style="left:246px;top:-1px">Jurgen (Maldegem)</div>
<div class="d" style="left:447px;">Weeronline</div>
<div class="d" style="left:566px;">2.4</div>
<div class="ai" style="left:655px;top:3px"><svg class="ar" width="7" height="11" viewBox="0 0 7 11"><path d="M3 0h1v7h3v1h-1v1h-1v1h-1v1H3v-1H2V9H1V8H0V7h3z" fill="#f00"/></svg></div>
<div class="d" style="left:685px;">55</div>
<div class="d g" style="left:794px">55</div>
<div class="d" style="left:865px;">281.9</div>
<div class="d" style="left:915px;">(276.9 <span style="color:#f00">+ 5</span>)</div>
</div>
<div class="row" style="top:546px">
<div class="c" style="left:3px;width:28px;background:#fff"></div>
<div class="c" style="left:33px;width:47px;background:#fff"></div>
<div class="c" style="left:82px;width:142px;background:#fff"></div>
<div class="c" style="left:226px;width:219px;background:#fff"></div>
<div class="c" style="left:447px;width:117px;background:#fff"></div>
<div class="c" style="left:566px;width:86px;background:#fff"></div>
<div class="c" style="left:654px;width:29px;background:#fff"></div>
<div class="c" style="left:685px;width:76px;background:#fff"></div>
<div class="c" style="left:763px;width:29px;background:#fff"></div>
<div class="c" style="left:794px;width:38px;background:#fff"></div>
<div class="c" style="left:834px;width:29px;background:#fff"></div>
<div class="c" style="left:865px;width:48px;background:#fff"></div>
<div class="c" style="left:915px;width:67px;background:#fff"></div>
<div class="d r" style="left:3px;">18</div>
<div class="ai" style="left:34px;top:2px"><svg class="ar" width="7" height="11" viewBox="0 0 7 11"><path d="M3 0h1v1h1v1h1v1h1v1H4v7H3V4H0V3h1V2h1V1h1z" fill="#0f0"/></svg></div>
<div class="d r" style="left:44px;">(+5)</div>
<div class="d r" style="left:82px;">-</div>
<div class="ai" style="left:227px;top:3px"><svg class="ic" width="11" height="11" viewBox="0 0 11 11"><rect width="11" height="11" fill="#00f"/><path d="M1 1h9v2H7v5h3v2H1V8h3V3H1z" fill="#fff"/></svg></div>
<div class="d r" style="left:246px;top:-1px">GEMIDDELD</div>
<div class="d r" style="left:447px;">Weerfora WW+WO</div>
<div class="d r" style="left:566px;">1.6</div>
<div class="ai" style="left:655px;top:3px"><svg class="ar" width="7" height="11" viewBox="0 0 7 11"><path d="M3 0h1v7h3v1h-1v1h-1v1h-1v1H3v-1H2V9H1V8H0V7h3z" fill="#f00"/></svg></div>
<div class="d r" style="left:685px;">51</div>
<div class="d r" style="left:794px;">60</div>
<div class="d r" style="left:865px;">281.6</div>
</div>
<div class="row" style="top:566px">
<div class="c" style="left:3px;width:28px;background:#fff"></div>
<div class="c" style="left:33px;width:47px;background:#fff"></div>
<div class="c" style="left:82px;width:142px;background:#fff"></div>
<div class="c" style="left:226px;width:219px;background:#fff"></div>
<div class="c" style="left:447px;width:117px;background:#fff"></div>
<div class="c" style="left:566px;width:86px;background:#fff"></div>
<div class="c" style="left:654px;width:29px;background:#fff"></div>
<div class="c" style="left:685px;width:76px;background:#fff"></div>
<div class="c" style="left:763px;width:29px;background:#fff"></div>
<div class="c" style="left:794px;width:38px;background:#fff"></div>
<div class="c" style="left:834px;width:29px;background:#fff"></div>
<div class="c" style="left:865px;width:48px;background:#fff"></div>
<div class="c" style="left:915px;width:67px;background:#fff"></div>
<div class="d r" style="left:3px;">18</div>
<div class="ai" style="left:34px;top:2px"><svg class="ar" width="7" height="11" viewBox="0 0 7 11"><path d="M3 0h1v7h3v1h-1v1h-1v1h-1v1H3v-1H2V9H1V8H0V7h3z" fill="#f00"/></svg></div>
<div class="d r" style="left:44px;">(-11)</div>
<div class="d r" style="left:82px;">-</div>
<div class="ai" style="left:227px;top:3px"><svg class="ic" width="11" height="11" viewBox="0 0 11 11"><rect width="11" height="11" fill="#00f"/><path d="M1 1h9v2H7v5h3v2H1V8h3V3H1z" fill="#fff"/></svg></div>
<div class="d r" style="left:246px;top:-1px">GEMIDDELD WO</div>
<div class="d r" style="left:447px;">Weeronline</div>
<div class="d r" style="left:566px;">1.3</div>
<div class="ai" style="left:655px;top:3px"><svg class="ar" width="7" height="11" viewBox="0 0 7 11"><path d="M3 0h1v7h3v1h-1v1h-1v1h-1v1H3v-1H2V9H1V8H0V7h3z" fill="#f00"/></svg></div>
<div class="d r" style="left:685px;">54</div>
<div class="d r" style="left:794px;">62</div>
<div class="d r" style="left:865px;">281.6</div>
</div>
<div class="row" style="top:586px">
<div class="c" style="left:3px;width:28px;background:#fff"></div>
<div class="c" style="left:33px;width:47px;background:#fff"></div>
<div class="c" style="left:82px;width:142px;background:#fff"></div>
<div class="c" style="left:226px;width:219px;background:#fff"></div>
<div class="c" style="left:447px;width:117px;background:#fff"></div>
<div class="c" style="left:566px;width:86px;background:#fff"></div>
<div class="c" style="left:654px;width:29px;background:#fff"></div>
<div class="c" style="left:685px;width:76px;background:#fff"></div>
<div class="c" style="left:763px;width:29px;background:#fff"></div>
<div class="c" style="left:794px;width:38px;background:#fff"></div>
<div class="c" style="left:834px;width:29px;background:#fff"></div>
<div class="c" style="left:865px;width:48px;background:#fff"></div>
<div class="c" style="left:915px;width:67px;background:#fff"></div>
<div class="d" style="left:3px;">20</div>
<div class="ai" style="left:34px;top:2px"><svg class="ar" width="7" height="11" viewBox="0 0 7 11"><path d="M3 0h1v1h1v1h1v1h1v1H4v7H3V4H0V3h1V2h1V1h1z" fill="#0f0"/></svg></div>
<div class="d" style="left:44px;">(+21)</div>
<div class="d" style="left:82px;">-</div>
<div class="ai" style="left:227px;top:3px"><svg class="ic" width="11" height="11" viewBox="0 0 11 11"><rect width="11" height="11" fill="#00f"/><path d="M1 1h9v2H7v5h3v2H1V8h3V3H1z" fill="#fff"/></svg></div>
<div class="d" style="left:246px;top:-1px">Dirk (Brugge)</div>
<div class="d" style="left:447px;">Weerwoord</div>
<div class="d" style="left:566px;">2.5</div>
<div class="ai" style="left:655px;top:3px"><svg class="ar" width="7" height="11" viewBox="0 0 7 11"><path d="M3 0h1v7h3v1h-1v1h-1v1h-1v1H3v-1H2V9H1V8H0V7h3z" fill="#f00"/></svg></div>
<div class="d" style="left:685px;">50</div>
<div class="d g" style="left:794px">55</div>
<div class="d" style="left:865px;">281.3</div>
<div class="d" style="left:915px;">(276.3 <span style="color:#f00">+ 5</span>)</div>
</div>
<div class="row" style="top:606px">
<div class="c" style="left:3px;width:28px;background:#fff"></div>
<div class="c" style="left:33px;width:47px;background:#fff"></div>
<div class="c" style="left:82px;width:142px;background:#fff"></div>
<div class="c" style="left:226px;width:219px;background:#fff"></div>
<div class="c" style="left:447px;width:117px;background:#fff"></div>
<div class="c" style="left:566px;width:86px;background:#fff"></div>
<div class="c" style="left:654px;width:29px;background:#fff"></div>
<div class="c" style="left:685px;width:76px;background:#fff"></div>
<div class="c" style="left:763px;width:29px;background:#fff"></div>
<div class="c" style="left:794px;width:38px;background:#fff"></div>
<div class="c" style="left:834px;width:29px;background:#fff"></div>
<div class="c" style="left:865px;width:48px;background:#fff"></div>
<div class="c" style="left:915px;width:67px;background:#fff"></div>
<div class="d" style="left:3px;">21</div>
<div class="ai" style="left:34px;top:2px"><svg class="ar" width="7" height="11" viewBox="0 0 7 11"><path d="M3 0h1v7h3v1h-1v1h-1v1h-1v1H3v-1H2V9H1V8H0V7h3z" fill="#f00"/></svg></div>
<div class="d" style="left:44px;">(-18)</div>
<div class="d" style="left:82px;">-</div>
<div class="ai" style="left:227px;top:3px"><svg class="ic" width="11" height="11" viewBox="0 0 11 11"><rect width="11" height="11" fill="#00f"/><path d="M1 1h9v2H7v5h3v2H1V8h3V3H1z" fill="#fff"/></svg></div>
<div class="d" style="left:246px;top:-1px">Kirsten (Gouda)</div>
<div class="d" style="left:447px;">Weerwoord</div>
<div class="d" style="left:566px;">1.8</div>
<div class="ai" style="left:655px;top:3px"><svg class="ar" width="7" height="11" viewBox="0 0 7 11"><path d="M3 0h1v7h3v1h-1v1h-1v1h-1v1H3v-1H2V9H1V8H0V7h3z" fill="#f00"/></svg></div>
<div class="d" style="left:685px;">55</div>
<div class="d" style="left:794px;">52</div>
<div class="d" style="left:865px;">280.5</div>
</div>
<div class="row" style="top:626px">
<div class="c" style="left:3px;width:28px;background:#fff"></div>
<div class="c" style="left:33px;width:47px;background:#fff"></div>
<div class="c" style="left:82px;width:142px;background:#fff"></div>
<div class="c" style="left:226px;width:219px;background:#fff"></div>
<div class="c" style="left:447px;width:117px;background:#fff"></div>
<div class="c" style="left:566px;width:86px;background:#fff"></div>
<div class="c" style="left:654px;width:29px;background:#fff"></div>
<div class="c" style="left:685px;width:76px;background:#fff"></div>
<div class="c" style="left:763px;width:29px;background:#fff"></div>
<div class="c" style="left:794px;width:38px;background:#fff"></div>
<div class="c" style="left:834px;width:29px;background:#fff"></div>
<div class="c" style="left:865px;width:48px;background:#fff"></div>
<div class="c" style="left:915px;width:67px;background:#fff"></div>
<div class="d" style="left:3px;">21</div>
<div class="ai" style="left:34px;top:2px"><svg class="ar" width="7" height="11" viewBox="0 0 7 11"><path d="M3 0h1v7h3v1h-1v1h-1v1h-1v1H3v-1H2V9H1V8H0V7h3z" fill="#f00"/></svg></div>
<div class="d" style="left:44px;">(-15)</div>
<div class="d" style="left:82px;">-</div>
<div class="ai" style="left:227px;top:3px"><svg class="ic" width="11" height="11" viewBox="0 0 11 11"><rect width="11" height="11" fill="#00f"/><path d="M1 1h9v2H7v5h3v2H1V8h3V3H1z" fill="#fff"/></svg></div>
<div class="d" style="left:246px;top:-1px">André (Hoofddorp)</div>
<div class="d" style="left:447px;">Weeronline</div>
<div class="d" style="left:566px;">1.8</div>
<div class="ai" style="left:655px;top:3px"><svg class="ar" width="7" height="11" viewBox="0 0 7 11"><path d="M3 0h1v7h3v1h-1v1h-1v1h-1v1H3v-1H2V9H1V8H0V7h3z" fill="#f00"/></svg></div>
<div class="d" style="left:685px;">55</div>
<div class="d" style="left:794px;">58</div>
<div class="d" style="left:865px;">280.5</div>
</div>
<div class="row" style="top:646px">
<div class="c" style="left:3px;width:28px;background:#fff"></div>
<div class="c" style="left:33px;width:47px;background:#fff"></div>
<div class="c" style="left:82px;width:142px;background:#fff"></div>
<div class="c" style="left:226px;width:219px;background:#fff"></div>
<div class="c" style="left:447px;width:117px;background:#fff"></div>
<div class="c" style="left:566px;width:86px;background:#fff"></div>
<div class="c" style="left:654px;width:29px;background:#fff"></div>
<div class="c" style="left:685px;width:76px;background:#fff"></div>
<div class="c" style="left:763px;width:29px;background:#fff"></div>
<div class="c" style="left:794px;width:38px;background:#fff"></div>
<div class="c" style="left:834px;width:29px;background:#fff"></div>
<div class="c" style="left:865px;width:48px;background:#fff"></div>
<div class="c" style="left:915px;width:67px;background:#fff"></div>
<div class="d r" style="left:3px;">23</div>
<div class="ai" style="left:34px;top:2px"><svg class="ar" width="7" height="11" viewBox="0 0 7 11"><path d="M3 0h1v1h1v1h1v1h1v1H4v7H3V4H0V3h1V2h1V1h1z" fill="#0f0"/></svg></div>
<div class="d r" style="left:44px;">(+11)</div>
<div class="d r" style="left:82px;">-</div>
<div class="ai" style="left:227px;top:3px"><svg class="ic" width="11" height="11" viewBox="0 0 11 11"><rect width="11" height="11" fill="#00f"/><path d="M1 1h9v2H7v5h3v2H1V8h3V3H1z" fill="#fff"/></svg></div>
<div class="d r" style="left:246px;top:-1px">GEMIDDELD WW</div>
<div class="d r" style="left:447px;">Weerwoord</div>
<div class="d r" style="left:566px;">1.7</div>
<div class="ai" style="left:655px;top:3px"><svg class="ar" width="7" height="11" viewBox="0 0 7 11"><path d="M3 0h1v7h3v1h-1v1h-1v1h-1v1H3v-1H2V9H1V8H0V7h3z" fill="#f00"/></svg></div>
<div class="d r" style="left:685px;">51</div>
<div class="d r" style="left:794px;">60</div>
<div class="d r" style="left:865px;">280.1</div>
</div>
<div class="row" style="top:666px">
<div class="c" style="left:3px;width:28px;background:#fff"></div>
<div class="c" style="left:33px;width:47px;background:#fff"></div>
<div class="c" style="left:82px;width:142px;background:#fff"></div>
<div class="c" style="left:226px;width:219px;background:#fff"></div>
<div class="c" style="left:447px;width:117px;background:#fff"></div>
<div class="c" style="left:566px;width:86px;background:#fff"></div>
<div class="c" style="left:654px;width:29px;background:#fff"></div>
<div class="c" style="left:685px;width:76px;background:#fff"></div>
<div class="c" style="left:763px;width:29px;background:#fff"></div>
<div class="c" style="left:794px;width:38px;background:#fff"></div>
<div class="c" style="left:834px;width:29px;background:#fff"></div>
<div class="c" style="left:865px;width:48px;background:#fff"></div>
<div class="c" style="left:915px;width:67px;background:#fff"></div>
<div class="d" style="left:3px;">24</div>
<div class="ai" style="left:34px;top:2px"><svg class="ar" width="7" height="11" viewBox="0 0 7 11"><path d="M3 0h1v7h3v1h-1v1h-1v1h-1v1H3v-1H2V9H1V8H0V7h3z" fill="#f00"/></svg></div>
<div class="d" style="left:44px;">(-7)</div>
<div class="d" style="left:82px;">-</div>
<div class="ai" style="left:227px;top:3px"><svg class="ic" width="11" height="11" viewBox="0 0 11 11"><rect width="11" height="11" fill="#00f"/><path d="M1 1h9v2H7v5h3v2H1V8h3V3H1z" fill="#fff"/></svg></div>
<div class="d" style="left:246px;top:-1px">Xavier (Torhout)</div>
<div class="d" style="left:447px;">Weerwoord</div>
<div class="d" style="left:566px;">-0.1</div>
<div class="ai" style="left:655px;top:3px"><svg class="ar" width="7" height="11" viewBox="0 0 7 11"><path d="M3 0h1v7h3v1h-1v1h-1v1h-1v1H3v-1H2V9H1V8H0V7h3z" fill="#f00"/></svg></div>
<div class="d" style="left:685px;">53</div>
<div class="d" style="left:794px;">53</div>
<div class="d" style="left:865px;">279.5</div>
</div>
<div class="row" style="top:686px">
<div class="c" style="left:3px;width:28px;background:#fff"></div>
<div class="c" style="left:33px;width:47px;background:#fff"></div>
<div class="c" style="left:82px;width:142px;background:#fff"></div>
<div class="c" style="left:226px;width:219px;background:#fff"></div>
<div class="c" style="left:447px;width:117px;background:#fff"></div>
<div class="c" style="left:566px;width:86px;background:#fff"></div>
<div class="c" style="left:654px;width:29px;background:#fff"></div>
<div class="c" style="left:685px;width:76px;background:#fff"></div>
<div class="c" style="left:763px;width:29px;background:#fff"></div>
<div class="c" style="left:794px;width:38px;background:#fff"></div>
<div class="c" style="left:834px;width:29px;background:#fff"></div>
<div class="c" style="left:865px;width:48px;background:#fff"></div>
<div class="c" style="left:915px;width:67px;background:#fff"></div>
<div class="d" style="left:3px;">25</div>
<div class="ai" style="left:34px;top:2px"><svg class="ar" width="7" height="11" viewBox="0 0 7 11"><path d="M3 0h1v1h1v1h1v1h1v1H4v7H3V4H0V3h1V2h1V1h1z" fill="#0f0"/></svg></div>
<div class="d" style="left:44px;">(+12)</div>
<div class="d" style="left:82px;">-</div>
<div class="ai" style="left:227px;top:3px"><svg class="ic" width="11" height="11" viewBox="0 0 11 11"><rect width="11" height="11" fill="#00f"/><path d="M1 1h9v2H7v5h3v2H1V8h3V3H1z" fill="#fff"/></svg></div>
<div class="d" style="left:246px;top:-1px">Yorick (Hilversum)</div>
<div class="d" style="left:447px;">Weerwoord</div>
<div class="d" style="left:566px;">1.5</div>
<div class="ai" style="left:655px;top:3px"><svg class="ar" width="7" height="11" viewBox="0 0 7 11"><path d="M3 0h1v7h3v1h-1v1h-1v1h-1v1H3v-1H2V9H1V8H0V7h3z" fill="#f00"/></svg></div>
<div class="d" style="left:685px;">50</div>
<div class="d" style="left:794px;">62</div>
<div class="d" style="left:865px;">278.7</div>
</div>
<div class="row" style="top:706px">
<div class="c" style="left:3px;width:28px;background:#fff"></div>
<div class="c" style="left:33px;width:47px;background:#fff"></div>
<div class="c" style="left:82px;width:142px;background:#fff"></div>
<div class="c" style="left:226px;width:219px;background:#fff"></div>
<div class="c" style="left:447px;width:117px;background:#fff"></div>
<div class="c" style="left:566px;width:86px;background:#fff"></div>
<div class="c" style="left:654px;width:29px;background:#fff"></div>
<div class="c" style="left:685px;width:76px;background:#fff"></div>
<div class="c" style="left:763px;width:29px;background:#fff"></div>
<div class="c" style="left:794px;width:38px;background:#fff"></div>
<div class="c" style="left:834px;width:29px;background:#fff"></div>
<div class="c" style="left:865px;width:48px;background:#fff"></div>
<div class="c" style="left:915px;width:67px;background:#fff"></div>
<div class="d" style="left:3px;">26</div>
<div class="ai" style="left:34px;top:2px"><svg class="ar" width="7" height="11" viewBox="0 0 7 11"><path d="M3 0h1v7h3v1h-1v1h-1v1h-1v1H3v-1H2V9H1V8H0V7h3z" fill="#f00"/></svg></div>
<div class="d" style="left:44px;">(-8)</div>
<div class="d" style="left:82px;">-</div>
<div class="ai" style="left:227px;top:3px"><svg class="ic" width="11" height="11" viewBox="0 0 11 11"><rect width="11" height="11" fill="#00f"/><path d="M1 1h9v2H7v5h3v2H1V8h3V3H1z" fill="#fff"/></svg></div>
<div class="d" style="left:246px;top:-1px">Jm (Tervuren)</div>
<div class="d" style="left:447px;">Weerwoord</div>
<div class="d" style="left:566px;">1.6</div>
<div class="ai" style="left:655px;top:3px"><svg class="ar" width="7" height="11" viewBox="0 0 7 11"><path d="M3 0h1v7h3v1h-1v1h-1v1h-1v1H3v-1H2V9H1V8H0V7h3z" fill="#f00"/></svg></div>
<div class="d" style="left:685px;">61</div>
<div class="d" style="left:794px;">58</div>
<div class="d" style="left:865px;">278.3</div>
</div>
<div class="row" style="top:726px">
<div class="c" style="left:3px;width:28px;background:#fff"></div>
<div class="c" style="left:33px;width:47px;background:#fff"></div>
<div class="c" style="left:82px;width:142px;background:#fff"></div>
<div class="c" style="left:226px;width:219px;background:#fff"></div>
<div class="c" style="left:447px;width:117px;background:#fff"></div>
<div class="c" style="left:566px;width:86px;background:#fff"></div>
<div class="c" style="left:654px;width:29px;background:#fff"></div>
<div class="c" style="left:685px;width:76px;background:#fff"></div>
<div class="c" style="left:763px;width:29px;background:#fff"></div>
<div class="c" style="left:794px;width:38px;background:#fff"></div>
<div class="c" style="left:834px;width:29px;background:#fff"></div>
<div class="c" style="left:865px;width:48px;background:#fff"></div>
<div class="c" style="left:915px;width:67px;background:#fff"></div>
<div class="d" style="left:3px;">26</div>
<div class="ai" style="left:34px;top:2px"><svg class="ar" width="7" height="11" viewBox="0 0 7 11"><path d="M3 0h1v1h1v1h1v1h1v1H4v7H3V4H0V3h1V2h1V1h1z" fill="#0f0"/></svg></div>
<div class="d" style="left:44px;">(+12)</div>
<div class="d" style="left:82px;">-</div>
<div class="ai" style="left:227px;top:3px"><svg class="ic" width="11" height="11" viewBox="0 0 11 11"><rect width="11" height="11" fill="#00f"/><path d="M1 1h9v2H7v5h3v2H1V8h3V3H1z" fill="#fff"/></svg></div>
<div class="d" style="left:246px;top:-1px">Peter (Westerbroek)</div>
<div class="d" style="left:447px;">Weerwoord</div>
<div class="d" style="left:566px;">2.3</div>
<div class="ai" style="left:655px;top:3px"><svg class="ar" width="7" height="11" viewBox="0 0 7 11"><path d="M3 0h1v7h3v1h-1v1h-1v1h-1v1H3v-1H2V9H1V8H0V7h3z" fill="#f00"/></svg></div>
<div class="d" style="left:685px;">61</div>
<div class="d g" style="left:794px">55</div>
<div class="d" style="left:865px;">278.3</div>
<div class="d" style="left:915px;">(273.3 <span style="color:#f00">+ 5</span>)</div>
</div>
<div class="row" style="top:746px">
<div class="c" style="left:3px;width:28px;background:#fff"></div>
<div class="c" style="left:33px;width:47px;background:#fff"></div>
<div class="c" style="left:82px;width:142px;background:#fff"></div>
<div class="c" style="left:226px;width:219px;background:#fff"></div>
<div class="c" style="left:447px;width:117px;background:#fff"></div>
<div class="c" style="left:566px;width:86px;background:#fff"></div>
<div class="c" style="left:654px;width:29px;background:#fff"></div>
<div class="c" style="left:685px;width:76px;background:#fff"></div>
<div class="c" style="left:763px;width:29px;background:#fff"></div>
<div class="c" style="left:794px;width:38px;background:#fff"></div>
<div class="c" style="left:834px;width:29px;background:#fff"></div>
<div class="c" style="left:865px;width:48px;background:#fff"></div>
<div class="c" style="left:915px;width:67px;background:#fff"></div>
<div class="d" style="left:3px;">28</div>
<div class="ai" style="left:34px;top:2px"><svg class="ar" width="7" height="11" viewBox="0 0 7 11"><path d="M3 0h1v7h3v1h-1v1h-1v1h-1v1H3v-1H2V9H1V8H0V7h3z" fill="#f00"/></svg></div>
<div class="d" style="left:44px;">(-13)</div>
<div class="d" style="left:82px;">-</div>
<div class="ai" style="left:227px;top:3px"><svg class="ic" width="11" height="11" viewBox="0 0 11 11"><rect width="11" height="11" fill="#00f"/><path d="M1 1h9v2H7v5h3v2H1V8h3V3H1z" fill="#fff"/></svg></div>
<div class="d" style="left:246px;top:-1px">Remko (Den Haag)</div>
<div class="d" style="left:447px;">Weerwoord</div>
<div class="d" style="left:566px;">1.9</div>
<div class="ai" style="left:655px;top:3px"><svg class="ar" width="7" height="11" viewBox="0 0 7 11"><path d="M3 0h1v7h3v1h-1v1h-1v1h-1v1H3v-1H2V9H1V8H0V7h3z" fill="#f00"/></svg></div>
<div class="d" style="left:685px;">50</div>
<div class="d" style="left:794px;">51</div>
<div class="d" style="left:865px;">278.1</div>
</div>
<div class="row" style="top:766px">
<div class="c" style="left:3px;width:28px;background:#fff"></div>
<div class="c" style="left:33px;width:47px;background:#fff"></div>
<div class="c" style="left:82px;width:142px;background:#fff"></div>
<div class="c" style="left:226px;width:219px;background:#fff"></div>
<div class="c" style="left:447px;width:117px;background:#fff"></div>
<div class="c" style="left:566px;width:86px;background:#fff"></div>
<div class="c" style="left:654px;width:29px;background:#fff"></div>
<div class="c" style="left:685px;width:76px;background:#fff"></div>
<div class="c" style="left:763px;width:29px;background:#fff"></div>
<div class="c" style="left:794px;width:38px;background:#fff"></div>
<div class="c" style="left:834px;width:29px;background:#fff"></div>
<div class="c" style="left:865px;width:48px;background:#fff"></div>
<div class="c" style="left:915px;width:67px;background:#fff"></div>
<div class="d" style="left:3px;">29</div>
<div class="ai" style="left:34px;top:2px"><svg class="ar" width="7" height="11" viewBox="0 0 7 11"><path d="M3 0h1v7h3v1h-1v1h-1v1h-1v1H3v-1H2V9H1V8H0V7h3z" fill="#f00"/></svg></div>
<div class="d" style="left:44px;">(-17)</div>
<div class="d" style="left:82px;">-</div>
<div class="ai" style="left:227px;top:3px"><svg class="ic" width="11" height="11" viewBox="0 0 11 11"><rect width="11" height="11" fill="#00f"/><path d="M1 1h9v2H7v5h3v2H1V8h3V3H1z" fill="#fff"/></svg></div>
<div class="d" style="left:246px;top:-1px">Bas C (Oostvoorne)</div>
<div class="d" style="left:447px;">Weerwoord</div>
<div class="d" style="left:566px;">1.5</div>
<div class="ai" style="left:655px;top:3px"><svg class="ar" width="7" height="11" viewBox="0 0 7 11"><path d="M3 0h1v7h3v1h-1v1h-1v1h-1v1H3v-1H2V9H1V8H0V7h3z" fill="#f00"/></svg></div>
<div class="d" style="left:685px;">55</div>
<div class="d" style="left:794px;">62</div>
<div class="d" style="left:865px;">277.9</div>
</div>
<div class="row" style="top:786px">
<div class="c" style="left:3px;width:28px;background:#fff"></div>
<div class="c" style="left:33px;width:47px;background:#fff"></div>
<div class="c" style="left:82px;width:142px;background:#fff"></div>
<div class="c" style="left:226px;width:219px;background:#fff"></div>
<div class="c" style="left:447px;width:117px;background:#fff"></div>
<div class="c" style="left:566px;width:86px;background:#fff"></div>
<div class="c" style="left:654px;width:29px;background:#fff"></div>
<div class="c" style="left:685px;width:76px;background:#fff"></div>
<div class="c" style="left:763px;width:29px;background:#fff"></div>
<div class="c" style="left:794px;width:38px;background:#fff"></div>
<div class="c" style="left:834px;width:29px;background:#fff"></div>
<div class="c" style="left:865px;width:48px;background:#fff"></div>
<div class="c" style="left:915px;width:67px;background:#fff"></div>
<div class="d" style="left:3px;">30</div>
<div class="ai" style="left:34px;top:2px"><svg class="ar" width="7" height="11" viewBox="0 0 7 11"><path d="M3 0h1v7h3v1h-1v1h-1v1h-1v1H3v-1H2V9H1V8H0V7h3z" fill="#f00"/></svg></div>
<div class="d" style="left:44px;">(-14)</div>
<div class="d" style="left:82px;">-</div>
<div class="ai" style="left:227px;top:3px"><svg class="ic" width="11" height="11" viewBox="0 0 11 11"><rect width="11" height="11" fill="#00f"/><path d="M1 1h9v2H7v5h3v2H1V8h3V3H1z" fill="#fff"/></svg></div>
<div class="d" style="left:246px;top:-1px">Simon (Heist op den Berg)</div>
<div class="d" style="left:447px;">Weerwoord</div>
<div class="d" style="left:566px;">1.8</div>
<div class="ai" style="left:655px;top:3px"><svg class="ar" width="7" height="11" viewBox="0 0 7 11"><path d="M3 0h1v7h3v1h-1v1h-1v1h-1v1H3v-1H2V9H1V8H0V7h3z" fill="#f00"/></svg></div>
<div class="d" style="left:685px;">50</div>
<div class="d" style="left:794px;">50</div>
<div class="d" style="left:865px;">277.8</div>
</div>
<div class="row" style="top:806px">
<div class="c" style="left:3px;width:28px;background:#fff"></div>
<div class="c" style="left:33px;width:47px;background:#fff"></div>
<div class="c" style="left:82px;width:142px;background:#fff"></div>
<div class="c" style="left:226px;width:219px;background:#fff"></div>
<div class="c" style="left:447px;width:117px;background:#fff"></div>
<div class="c" style="left:566px;width:86px;background:#fff"></div>
<div class="c" style="left:654px;width:29px;background:#fff"></div>
<div class="c" style="left:685px;width:76px;background:#fff"></div>
<div class="c" style="left:763px;width:29px;background:#fff"></div>
<div class="c" style="left:794px;width:38px;background:#fff"></div>
<div class="c" style="left:834px;width:29px;background:#fff"></div>
<div class="c" style="left:865px;width:48px;background:#fff"></div>
<div class="c" style="left:915px;width:67px;background:#fff"></div>
<div class="d" style="left:3px;">30</div>
<div class="ai" style="left:34px;top:2px"><svg class="ar" width="7" height="11" viewBox="0 0 7 11"><path d="M3 0h1v1h1v1h1v1h1v1H4v7H3V4H0V3h1V2h1V1h1z" fill="#0f0"/></svg></div>
<div class="d" style="left:44px;">(+24)</div>
<div class="d" style="left:82px;">-</div>
<div class="ai" style="left:227px;top:3px"><svg class="ic" width="11" height="11" viewBox="0 0 11 11"><rect width="11" height="11" fill="#00f"/><path d="M1 1h9v2H7v5h3v2H1V8h3V3H1z" fill="#fff"/></svg></div>
<div class="d" style="left:246px;top:-1px">Nanne (Voorhout)</div>
<div class="d" style="left:447px;">Weeronline</div>
<div class="d" style="left:566px;">1.2</div>
<div class="ai" style="left:655px;top:3px"><svg class="ar" width="7" height="11" viewBox="0 0 7 11"><path d="M3 0h1v7h3v1h-1v1h-1v1h-1v1H3v-1H2V9H1V8H0V7h3z" fill="#f00"/></svg></div>
<div class="d" style="left:685px;">50</div>
<div class="d" style="left:794px;">65</div>
<div class="d" style="left:865px;">277.8</div>
</div>
<div class="row" style="top:826px">
<div class="c" style="left:3px;width:28px;background:#fff"></div>
<div class="c" style="left:33px;width:47px;background:#fff"></div>
<div class="c" style="left:82px;width:142px;background:#fff"></div>
<div class="c" style="left:226px;width:219px;background:#fff"></div>
<div class="c" style="left:447px;width:117px;background:#fff"></div>
<div class="c" style="left:566px;width:86px;background:#fff"></div>
<div class="c" style="left:654px;width:29px;background:#fff"></div>
<div class="c" style="left:685px;width:76px;background:#fff"></div>
<div class="c" style="left:763px;width:29px;background:#fff"></div>
<div class="c" style="left:794px;width:38px;background:#fff"></div>
<div class="c" style="left:834px;width:29px;background:#fff"></div>
<div class="c" style="left:865px;width:48px;background:#fff"></div>
<div class="c" style="left:915px;width:67px;background:#fff"></div>
<div class="d" style="left:3px;">32</div>
<div class="ai" style="left:34px;top:2px"><svg class="ar" width="7" height="11" viewBox="0 0 7 11"><path d="M3 0h1v7h3v1h-1v1h-1v1h-1v1H3v-1H2V9H1V8H0V7h3z" fill="#f00"/></svg></div>
<div class="d" style="left:44px;">(-19)</div>
<div class="d" style="left:82px;">-</div>
<div class="ai" style="left:227px;top:3px"><svg class="ic" width="11" height="11" viewBox="0 0 11 11"><rect width="11" height="11" fill="#00f"/><path d="M1 1h9v2H7v5h3v2H1V8h3V3H1z" fill="#fff"/></svg></div>
<div class="d" style="left:246px;top:-1px">Els (Veendam)</div>
<div class="d" style="left:447px;">Weerwoord</div>
<div class="d" style="left:566px;">2.0</div>
<div class="ai" style="left:655px;top:3px"><svg class="ar" width="7" height="11" viewBox="0 0 7 11"><path d="M3 0h1v7h3v1h-1v1h-1v1h-1v1H3v-1H2V9H1V8H0V7h3z" fill="#f00"/></svg></div>
<div class="d" style="left:685px;">55</div>
<div class="d" style="left:794px;">58</div>
<div class="d" style="left:865px;">277.5</div>
</div>
<div class="row" style="top:846px">
<div class="c" style="left:3px;width:28px;background:#fff"></div>
<div class="c" style="left:33px;width:47px;background:#fff"></div>
<div class="c" style="left:82px;width:142px;background:#fff"></div>
<div class="c" style="left:226px;width:219px;background:#fff"></div>
<div class="c" style="left:447px;width:117px;background:#fff"></div>
<div class="c" style="left:566px;width:86px;background:#fff"></div>
<div class="c" style="left:654px;width:29px;background:#fff"></div>
<div class="c" style="left:685px;width:76px;background:#fff"></div>
<div class="c" style="left:763px;width:29px;background:#fff"></div>
<div class="c" style="left:794px;width:38px;background:#fff"></div>
<div class="c" style="left:834px;width:29px;background:#fff"></div>
<div class="c" style="left:865px;width:48px;background:#fff"></div>
<div class="c" style="left:915px;width:67px;background:#fff"></div>
<div class="d" style="left:3px;">33</div>
<div class="ai" style="left:34px;top:2px"><svg class="ar" width="7" height="11" viewBox="0 0 7 11"><path d="M3 0h1v7h3v1h-1v1h-1v1h-1v1H3v-1H2V9H1V8H0V7h3z" fill="#f00"/></svg></div>
<div class="d" style="left:44px;">(-11)</div>
<div class="d" style="left:82px;">-</div>
<div class="ai" style="left:227px;top:3px"><svg class="ic" width="11" height="11" viewBox="0 0 11 11"><rect width="11" height="11" fill="#00f"/><path d="M1 1h9v2H7v5h3v2H1V8h3V3H1z" fill="#fff"/></svg></div>
<div class="d" style="left:246px;top:-1px">Marco Mulder (Zwolle)</div>
<div class="d" style="left:447px;">Weerwoord</div>
<div class="d" style="left:566px;">1.3</div>
<div class="ai" style="left:655px;top:3px"><svg class="ar" width="7" height="11" viewBox="0 0 7 11"><path d="M3 0h1v7h3v1h-1v1h-1v1h-1v1H3v-1H2V9H1V8H0V7h3z" fill="#f00"/></svg></div>
<div class="d" style="left:685px;">43</div>
<div class="d" style="left:794px;">61</div>
<div class="d" style="left:865px;">277.4</div>
</div>
<div class="row" style="top:866px">
<div class="c" style="left:3px;width:28px;background:#fff"></div>
<div class="c" style="left:33px;width:47px;background:#fff"></div>
<div class="c" style="left:82px;width:142px;background:#fff"></div>
<div class="c" style="left:226px;width:219px;background:#fff"></div>
<div class="c" style="left:447px;width:117px;background:#fff"></div>
<div class="c" style="left:566px;width:86px;background:#fff"></div>
<div class="c" style="left:654px;width:29px;background:#fff"></div>
<div class="c" style="left:685px;width:76px;background:#fff"></div>
<div class="c" style="left:763px;width:29px;background:#fff"></div>
<div class="c" style="left:794px;width:38px;background:#fff"></div>
<div class="c" style="left:834px;width:29px;background:#fff"></div>
<div class="c" style="left:865px;width:48px;background:#fff"></div>
<div class="c" style="left:915px;width:67px;background:#fff"></div>
<div class="d" style="left:3px;">34</div>
<div class="ai" style="left:34px;top:2px"><svg class="ar" width="7" height="11" viewBox="0 0 7 11"><path d="M3 0h1v1h1v1h1v1h1v1H4v7H3V4H0V3h1V2h1V1h1z" fill="#0f0"/></svg></div>
<div class="d" style="left:44px;">(+78)</div>
<div class="d" style="left:82px;">999 / nieuw</div>
<div class="ai" style="left:227px;top:3px"><svg class="ic" width="11" height="11" viewBox="0 0 11 11"><rect width="11" height="11" fill="#00f"/><path d="M1 1h9v2H7v5h3v2H1V8h3V3H1z" fill="#fff"/></svg></div>
<div class="d" style="left:246px;top:-1px">Wilco (Franeker)</div>
<div class="d" style="left:447px;">Weerwoord</div>
<div class="d g" style="left:566px">1.0</div>
<div class="ai" style="left:655px;top:3px"><svg class="ar" width="7" height="11" viewBox="0 0 7 11"><path d="M3 0h1v7h3v1h-1v1h-1v1h-1v1H3v-1H2V9H1V8H0V7h3z" fill="#f00"/></svg></div>
<div class="d" style="left:685px;">50</div>
<div class="d" style="left:794px;">70</div>
<div class="d" style="left:865px;">277</div>
<div class="d" style="left:915px;">(272 <span style="color:#f00">+ 5</span>)</div>
</div>
</body></html>
